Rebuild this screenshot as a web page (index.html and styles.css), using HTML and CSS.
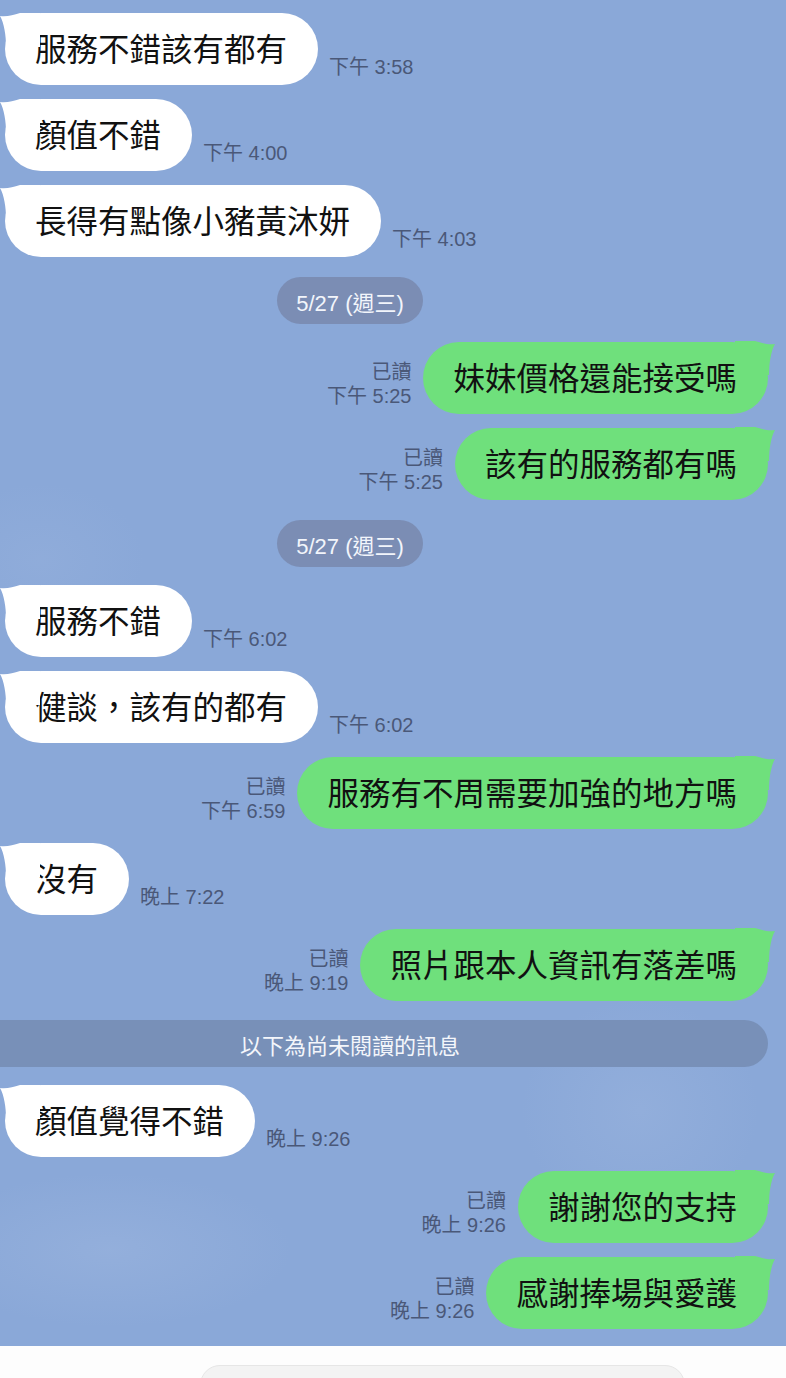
FILE: index.html
```html
<!DOCTYPE html>
<html lang="zh-Hant">
<head>
<meta charset="utf-8">
<title>LINE</title>
<link rel="stylesheet" href="styles.css">
</head>
<body>
<div class="screen">
  <div class="chat">
    <div class="row in"><div class="bubble">服務不錯該有都有</div><div class="meta"><span>下午 3:58</span></div></div>
    <div class="row in"><div class="bubble">顏值不錯</div><div class="meta"><span>下午 4:00</span></div></div>
    <div class="row in"><div class="bubble">長得有點像小豬黃沐妍</div><div class="meta"><span>下午 4:03</span></div></div>
    <div class="date"><span class="pill">5/27 (週三)</span></div>
    <div class="row out"><div class="meta"><span>已讀</span><span>下午 5:25</span></div><div class="bubble">妹妹價格還能接受嗎</div></div>
    <div class="row out"><div class="meta"><span>已讀</span><span>下午 5:25</span></div><div class="bubble">該有的服務都有嗎</div></div>
    <div class="date"><span class="pill">5/27 (週三)</span></div>
    <div class="row in"><div class="bubble">服務不錯</div><div class="meta"><span>下午 6:02</span></div></div>
    <div class="row in"><div class="bubble">健談，該有的都有</div><div class="meta"><span>下午 6:02</span></div></div>
    <div class="row out"><div class="meta"><span>已讀</span><span>下午 6:59</span></div><div class="bubble">服務有不周需要加強的地方嗎</div></div>
    <div class="row in"><div class="bubble">沒有</div><div class="meta"><span>晚上 7:22</span></div></div>
    <div class="row out"><div class="meta"><span>已讀</span><span>晚上 9:19</span></div><div class="bubble">照片跟本人資訊有落差嗎</div></div>
    <div class="unread">以下為尚未閱讀的訊息</div>
    <div class="row in"><div class="bubble">顏值覺得不錯</div><div class="meta"><span>晚上 9:26</span></div></div>
    <div class="row out"><div class="meta"><span>已讀</span><span>晚上 9:26</span></div><div class="bubble">謝謝您的支持</div></div>
    <div class="row out"><div class="meta"><span>已讀</span><span>晚上 9:26</span></div><div class="bubble">感謝捧場與愛護</div></div>
  </div>
  <div class="footer"><div class="input"></div></div>
</div>
</body>
</html>
```

FILE: styles.css
```css
* { box-sizing: border-box; }
html, body { margin: 0; padding: 0; }
body {
  width: 786px;
  height: 1378px;
  overflow: hidden;
  font-family: "Noto Sans CJK TC", "Noto Sans CJK SC", sans-serif;
  background: #ffffff;
}
.screen {
  width: 786px;
  height: 1378px;
  display: flex;
  flex-direction: column;
}
.chat {
  height: 1346px;
  flex: none;
  display: flex;
  flex-direction: column;
  gap: 14px;
  padding: 13px 18px 0 5px;
  background:
    radial-gradient(ellipse 260px 110px at 110px 1250px, rgba(165,188,226,0.35), rgba(165,188,226,0) 70%),
    radial-gradient(ellipse 170px 160px at 640px 1110px, rgba(165,188,226,0.3), rgba(165,188,226,0) 70%),
    radial-gradient(ellipse 150px 110px at 40px 560px, rgba(160,184,224,0.25), rgba(160,184,224,0) 70%),
    #8aa8d8;
  overflow: hidden;
}
.row {
  display: flex;
  align-items: flex-end;
}
.row.out { justify-content: flex-end; }
.bubble {
  position: relative;
  height: 72px;
  display: flex;
  align-items: center;
  padding: 0 31px 3px 30px;
  border-radius: 36px;
  font-size: 31.5px;
  line-height: 1;
  color: #111;
  white-space: nowrap;
}
.in .bubble { background: #ffffff; }
.out .bubble { background: #6fe07c; }
.bubble::before {
  content: "";
  position: absolute;
  top: 0;
  width: 40px;
  height: 34px;
  background: inherit;
  clip-path: path("M0 3 C7 4 13 2 20 0 L40 0 L40 34 L6 34 C6 22 4 10 0 3 Z");
}
.in .bubble::before { left: -5px; }
.out .bubble::before { right: -7px; transform: scaleX(-1); top: -1px; }
.meta {
  display: flex;
  flex-direction: column;
  font-family: "Liberation Sans", "Noto Sans CJK TC", sans-serif;
  font-size: 20px;
  line-height: 24px;
  color: #4a5878;
  margin-bottom: 6px;
  white-space: nowrap;
}
.in .meta { margin-left: 11px; }
.out .meta { margin-right: 12px; text-align: right; align-items: flex-end; }
.date {
  width: 690px;
  display: flex;
  justify-content: center;
  margin: 6px 0 4px;
}
.pill {
  height: 47px;
  padding: 0 19px;
  border-radius: 24px;
  background: #7b8db4;
  color: #f2f5fb;
  font-family: "Liberation Sans", "Noto Sans CJK TC", sans-serif;
  font-size: 22px;
  display: flex;
  align-items: center;
}
.unread {
  height: 47px;
  margin: 5px 0 4px -73px;
  border-radius: 24px;
  background: #7890b8;
  color: #f4f6fb;
  font-size: 22px;
  display: flex;
  align-items: center;
  justify-content: center;
}
.footer {
  flex: 1;
  background: #fdfdfd;
  padding: 19px 0 0 200px;
}
.input {
  width: 485px;
  height: 40px;
  background: #f3f3f3;
  border: 1px solid #e6e6e6;
  border-radius: 20px;
}
```
